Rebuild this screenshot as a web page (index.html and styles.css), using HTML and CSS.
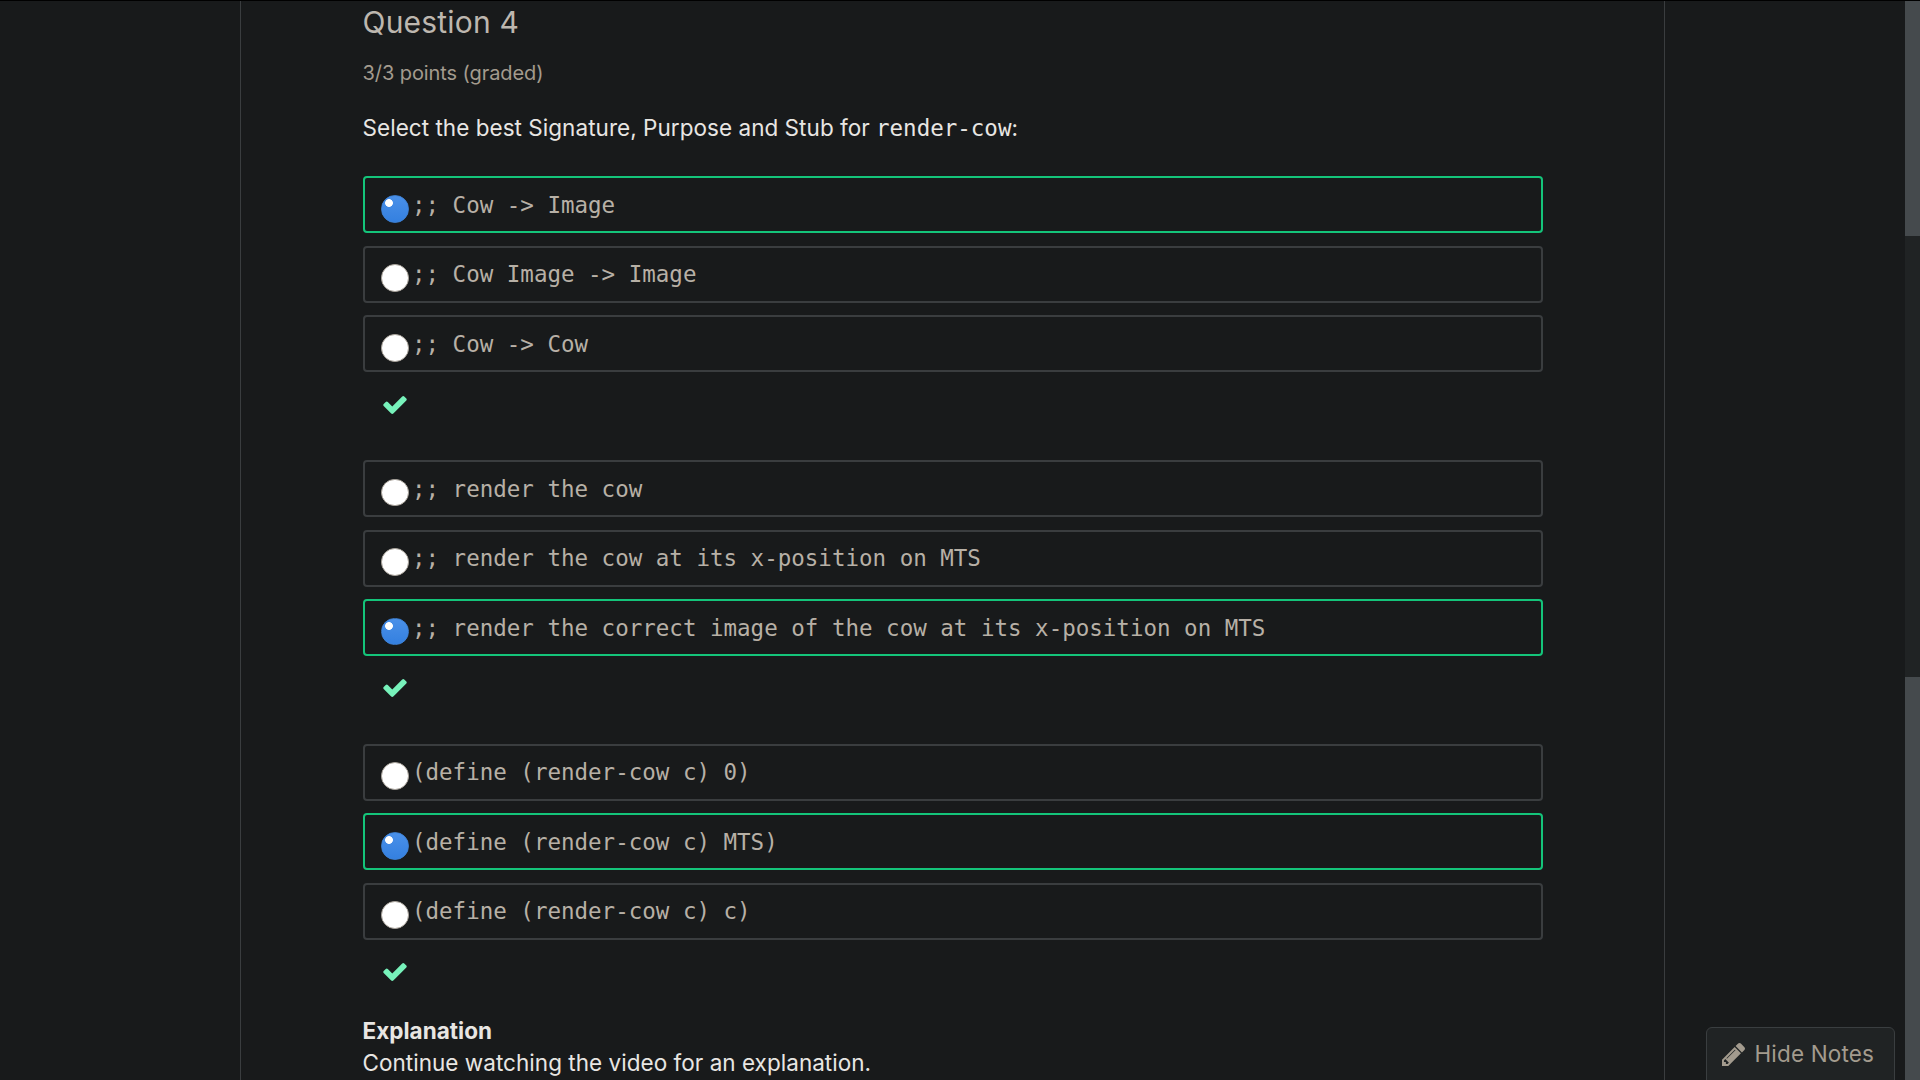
FILE: index.html
```html
<!DOCTYPE html>
<html lang="en">
<head>
<meta charset="utf-8">
<title>Question 4</title>
<link rel="stylesheet" href="styles.css">
</head>
<body>
<svg width="0" height="0" class="defs" aria-hidden="true">
  <symbol id="check" viewBox="0 0 1550 1188"><path d="M1550 232q0 40-28 68l-724 724-136 136q-28 28-68 28t-68-28L390 1024 28 662Q0 634 0 594t28-68l136-136q28-28 68-28t68 28l294 295L1250 28q28-28 68-28t68 28l136 136q28 28 28 68z"/></symbol>
  <symbol id="pencil" viewBox="0 0 1515 1515"><path d="M363 1387l91-91-235-235-91 91v107h128v128h107zM886 459q0-22-22-22-10 0-17 7l-542 542q-7 7-7 17 0 22 22 22 10 0 17-7l542-542q7-7 7-17zM832 267l416 416-832 832H0v-416zM1515 363q0 53-37 90l-166 166-416-416 166-165q36-38 90-38 53 0 91 38l235 234q37 39 37 91z"/></symbol>
</svg>
<div class="page">
  <main class="content">
    <h3 class="title">Question 4</h3>
    <div class="progress">3/3 points (graded)</div>
    <p class="prompt">Select the best Signature, Purpose and Stub for <code>render-cow</code>:</p>

    <div class="group">
      <label class="choice correct"><span class="radio on"></span><code>;; Cow -&gt; Image</code></label>
      <label class="choice"><span class="radio"></span><code>;; Cow Image -&gt; Image</code></label>
      <label class="choice"><span class="radio"></span><code>;; Cow -&gt; Cow</code></label>
      <svg class="status"><use href="#check"/></svg>
    </div>
    <div class="group">
      <label class="choice"><span class="radio"></span><code>;; render the cow</code></label>
      <label class="choice"><span class="radio"></span><code>;; render the cow at its x-position on MTS</code></label>
      <label class="choice correct"><span class="radio on"></span><code>;; render the correct image of the cow at its x-position on MTS</code></label>
      <svg class="status"><use href="#check"/></svg>
    </div>
    <div class="group">
      <label class="choice"><span class="radio"></span><code>(define (render-cow c) 0)</code></label>
      <label class="choice correct"><span class="radio on"></span><code>(define (render-cow c) MTS)</code></label>
      <label class="choice"><span class="radio"></span><code>(define (render-cow c) c)</code></label>
      <svg class="status"><use href="#check"/></svg>
    </div>

    <div class="explanation"><strong>Explanation</strong><p>Continue watching the video for an explanation.</p></div>
  </main>
  <div class="scrollbar"><div class="thumb upper"></div><div class="thumb lower"></div></div>
</div>
<button class="notes"><svg class="pencil"><use href="#pencil"/></svg><span>Hide Notes</span></button>
</body>
</html>
```
FILE: styles.css
```css
* { box-sizing: border-box; }
body {
  margin: 0;
  height: 1080px;
  overflow: hidden;
  background: #181a1b;
  color: #e8e6e3;
  font: 22.5px/32px Inter, sans-serif;
}
.defs { position: absolute; }
code {
  font-family: "DejaVu Sans Mono", monospace;
  font-size: 22.5px;
  letter-spacing: 0;
}
.page {
  display: flex;
  justify-content: space-between;
  height: 1080px;
  border-top: 1px solid #000;
}
.content {
  width: 1425px;
  margin-left: 240px;
  padding: 0 121px 0 122px;
  border: solid #3a3d3f;
  border-width: 0 1px;
}
.title {
  margin: 0 0 0 -0.5px;
  padding-top: 1px;
  font-size: 30px;
  font-weight: 400;
  line-height: 40px;
  letter-spacing: 0.2px;
  color: #bdb7af;
}
.progress {
  margin: 16px 0 0 -0.5px;
  font-size: 20px;
  line-height: 30px;
  letter-spacing: -0.08px;
  color: #a39b8e;
}
.prompt {
  height: 64.3px;
  margin: 24px 0 0 -0.5px;
  letter-spacing: 0.06px;
  word-spacing: -0.15px;
}
.group { height: 283.75px; }
.choice {
  display: flex;
  align-items: flex-start;
  height: 57px;
  margin-bottom: 12.5px;
  padding: 10px 15.7px;
  border: 2px solid #3a3d3f;
  border-radius: 4px;
  color: #b7b0a6;
}
.choice code { padding-top: 0.5px; }
.correct { border-color: #14c47a; }
.radio {
  flex: none;
  width: 27.8px;
  height: 27.8px;
  margin: 6.6px 3.2px 0 0.3px;
  border: 1px solid #aaa49b;
  border-radius: 50%;
  background: #fff;
}
.radio.on {
  border-color: #3e82d6;
  background: radial-gradient(circle at 7px 7px, #fff 3.5px, transparent 4.3px), linear-gradient(#4a90e8, #3480e0);
}
.status {
  display: block;
  width: 24px;
  height: 18px;
  margin: 23.4px 0 0 19.5px;
  fill: #77f2bb;
}
.explanation {
  margin: -13px 0 0 -0.5px;
  letter-spacing: 0.03px;
}
.explanation p { margin: 0; }
.scrollbar {
  display: flex;
  flex-direction: column;
  justify-content: space-between;
  width: 15px;
  background: #202324;
}
.thumb { background: #454a4d; }
.upper { height: 235px; }
.lower { height: 403px; }
.notes {
  position: absolute;
  left: 1706px;
  top: 1027px;
  display: flex;
  align-items: center;
  gap: 9.5px;
  width: 189px;
  height: 60px;
  padding: 0 0 7px 15px;
  border: 1px solid #3a3e40;
  border-radius: 6px;
  background: #202324;
  color: #a39b8e;
  font: 22.5px Inter, sans-serif;
  letter-spacing: 0.15px;
}
.pencil {
  width: 23px;
  height: 23px;
  margin-top: 1px;
  fill: #a39b8e;
}
```
